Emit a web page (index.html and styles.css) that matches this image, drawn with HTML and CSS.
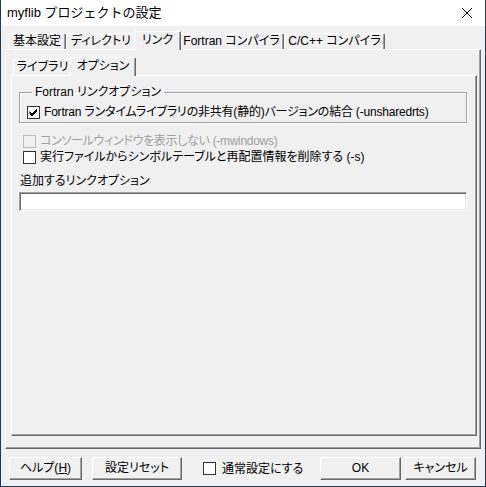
FILE: index.html
```html
<!DOCTYPE html>
<html lang="ja">
<head>
<meta charset="utf-8">
<title>myflib プロジェクトの設定</title>
<link rel="stylesheet" href="styles.css">
</head>
<body>
<div class="window">
  <div class="titlebar">
    <span class="title">myflib プロジェクトの設定</span>
    <svg class="close" width="12" height="12" viewBox="0 0 12 12"><path d="M1 1 L11 11 M11 1 L1 11" stroke="#000" stroke-width="1" fill="none"/></svg>
  </div>
  <div class="client">
    <div class="tabs outer-tabs">
      <div class="tab t-kihon">基本設定</div>
      <div class="tab t-dir">ディレクトリ</div>
      <div class="tab t-link selected">リンク</div>
      <div class="tab t-fortran">Fortran コンパイラ</div>
      <div class="tab t-c">C/C++ コンパイラ</div>
    </div>
    <div class="panel outer-panel">
      <div class="tabs inner-tabs">
        <div class="tab t-lib">ライブラリ</div>
        <div class="tab t-opt selected">オプション</div>
      </div>
      <div class="panel inner-panel">
        <fieldset class="group">
          <legend>Fortran リンクオプション</legend>
          <label class="check tight">
            <span class="box checked"><svg width="11" height="11" viewBox="0 0 11 11"><path d="M1.5 4.5 L4 7 L9 2 M1.5 5.5 L4 8 L9 3 M1.5 6.5 L4 9 L9 4" stroke="#000" stroke-width="1" fill="none"/></svg></span>
            <span>Fortran ランタイムライブラリの非共有(静的)バージョンの結合 (-unsharedrts)</span>
          </label>
        </fieldset>
        <label class="check disabled row-a">
          <span class="box"></span>
          <span>コンソールウィンドウを表示しない (-mwindows)</span>
        </label>
        <label class="check row-b">
          <span class="box"></span>
          <span>実行ファイルからシンボルテーブルと再配置情報を削除する (-s)</span>
        </label>
        <div class="field-label">追加するリンクオプション</div>
        <div class="textbox"></div>
      </div>
    </div>
    <div class="buttons">
      <div class="btn b-help">ヘルプ(<u>H</u>)</div>
      <div class="btn b-reset">設定リセット</div>
      <label class="check bottom-check">
        <span class="box"></span>
        <span>通常設定にする</span>
      </label>
      <div class="btn b-ok">OK</div>
      <div class="btn b-cancel">キャンセル</div>
    </div>
  </div>
</div>
</body>
</html>
```

FILE: styles.css
```css
* { box-sizing: border-box; }
html, body { margin: 0; padding: 0; background: #f0f0f0; }
body {
  font-family: "Liberation Sans", "Noto Sans CJK JP", sans-serif;
  font-size: 12px;
  font-feature-settings: "palt";
  color: #000;
}
.window {
  width: 486px;
  height: 487px;
  border: 1px solid #1c3a5e;
  border-top: none;
  background: #f0f0f0;
  display: flex;
  flex-direction: column;
}
.titlebar {
  height: 26px;
  background: #fff;
  display: flex;
  align-items: center;
  padding-left: 6px;
  padding-right: 12px;
  flex: none;
}
.title {
  flex: 1;
  font-size: 13px;
  font-feature-settings: normal;
  line-height: 16px;
  padding-bottom: 1px;
}
.close { display: block; margin-top: -1px; }
.client {
  flex: 1;
  display: flex;
  flex-direction: column;
  padding: 5px 4px 0 4px;
}
.tabs {
  display: flex;
  align-items: flex-end;
  position: relative;
  z-index: 1;
}
.outer-tabs { height: 18px; padding-left: 3px; }
.inner-tabs { height: 19px; padding-left: 2px; }
.tab {
  height: 16px;
  line-height: 15px;
  text-align: center;
  white-space: nowrap;
  background: #f0f0f0;
  border-top: 1px solid #fff;
  border-left: 1px solid #fff;
  border-right: 1px solid #696969;
  box-shadow: inset -1px 0 0 #a0a0a0;
  border-top-left-radius: 2px;
  border-top-right-radius: 2px;
}
.tab.selected {
  height: 19px;
  margin: 0 -2px -1px -2px;
  line-height: 16px;
  position: relative;
  z-index: 2;
}
.t-kihon { width: 58px; }
.t-dir { width: 70px; }
.t-link { width: 47px; }
.t-fortran { width: 105px; }
.t-c { width: 101px; }
.t-lib { width: 59px; }
.t-opt { width: 66px; }
.panel {
  border-top: 1px solid #fff;
  border-left: 1px solid #fff;
  border-right: 1px solid #696969;
  border-bottom: 1px solid #696969;
  box-shadow: inset -1px -1px 0 #a0a0a0;
}
.outer-panel {
  height: 400px;
  padding: 6px 3px 0 5px;
  display: flex;
  flex-direction: column;
}
.inner-panel {
  height: 361px;
  padding: 9px 9px 0 7px;
}
.group {
  margin: 0;
  padding: 5px 0 2px 7px;
  border: 1px solid #a0a0a0;
  box-shadow: inset 1px 1px 0 #fff, 1px 1px 0 #fff;
}
.group legend {
  padding: 0 3px;
  margin-left: 5px;
  line-height: 14px;
}
.check {
  display: flex;
  align-items: center;
  height: 16px;
  line-height: 16px;
  white-space: nowrap;
}
.check.tight { letter-spacing: -0.2px; }
.box {
  width: 13px;
  height: 13px;
  background: #fff;
  border: 1px solid #333;
  margin-right: 4px;
  flex: none;
  display: flex;
  align-items: center;
  justify-content: center;
  letter-spacing: 0;
}
.box svg { display: block; }
.check.disabled { color: #a0a0a0; letter-spacing: -0.3px; }
.check.disabled .box { background: #f0f0f0; border-color: #bcbcbc; }
.row-a { margin-top: 10px; margin-left: 4px; }
.row-b { margin-left: 4px; }
.field-label {
  margin-top: 8px;
  margin-left: 1px;
  line-height: 16px;
}
.textbox {
  margin-top: 3px;
  height: 19px;
  width: 448px;
  background: #fff;
  border-top: 1px solid #a0a0a0;
  border-left: 1px solid #a0a0a0;
  border-right: 1px solid #fff;
  border-bottom: 1px solid #fff;
  box-shadow: inset 1px 1px 0 #696969, inset -1px -1px 0 #e3e3e3;
}
.buttons {
  display: flex;
  align-items: center;
  padding: 8px 0 0 4px;
}
.btn {
  height: 23px;
  line-height: 21px;
  text-align: center;
  background: #f0f0f0;
  border-top: 1px solid #fff;
  border-left: 1px solid #fff;
  border-right: 1px solid #696969;
  border-bottom: 1px solid #696969;
  box-shadow: inset -1px -1px 0 #a0a0a0;
  white-space: nowrap;
}
.b-help { width: 73px; }
.b-reset { width: 90px; margin-left: 10px; }
.bottom-check { margin-left: 21px; width: 117px; }
.bottom-check .box { margin-right: 6px; }
.b-ok { width: 81px; }
.b-cancel { width: 71px; margin-left: 4px; }
u { text-decoration: underline; }
```
